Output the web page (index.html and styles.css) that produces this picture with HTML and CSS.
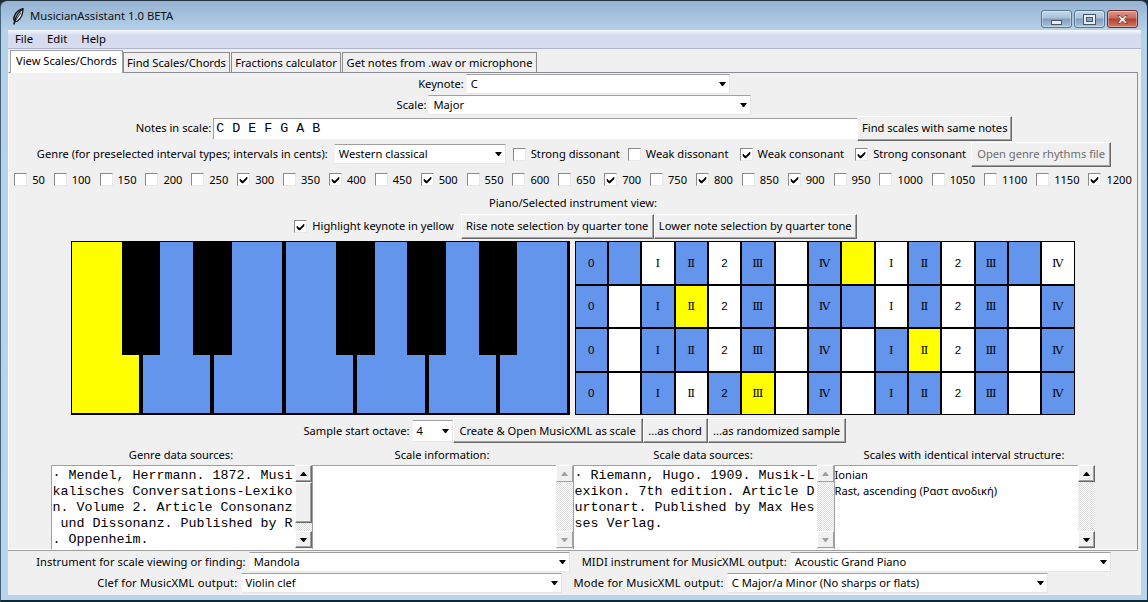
FILE: index.html
```html
<!DOCTYPE html>
<html lang="en">
<head>
<meta charset="utf-8">
<title>MusicianAssistant 1.0 BETA</title>
<link rel="stylesheet" href="styles.css">
</head>
<body>
<svg class="defs" width="0" height="0" aria-hidden="true">
  <symbol id="chk" viewBox="0 0 11 11"><path d="M2 5v2l2 2h1l4-4V3L5 7H4L3 6z" fill="#000" stroke="#000" stroke-width=".6"/></symbol>
  <symbol id="tri" viewBox="0 0 7 4"><path d="M0 0h7L4 4H3z" fill="currentColor"/></symbol>
  <symbol id="triup" viewBox="0 0 7 4"><path d="M0 4h7L4 0H3z" fill="currentColor"/></symbol>
</svg>
<div class="window">
  <header class="titlebar">
    <svg class="feather" width="12" height="17" viewBox="0 0 12 17"><path d="M11 .8C7.500 1.500 3.500 4.500 2.200 8.500 1.500 11 2 12.500 2.800 13.300L1.800 16.500" fill="none" stroke="#111" stroke-width="1.500"/><path d="M11 .8C11 5.500 9 10.500 5.500 13 4.500 13.700 3.500 13.700 2.800 13.300 3.500 9 7 4 11 .8z" fill="#e8eef4" stroke="#111" stroke-width="1.200"/><path d="M9 4.500 3.500 12.500" stroke="#111" stroke-width=".9"/></svg>
    <span class="wintitle">MusicianAssistant 1.0 BETA</span>
    <div class="caption">
      <div class="capbtn"><span class="glyph-min"></span></div>
      <div class="capbtn"><span class="glyph-max"></span></div>
      <div class="capbtn close"><svg width="15" height="11" viewBox="0 0 15 11"><path d="M2.500 1.500h2.500l2.500 2.500 2.500-2.500h2.500L9.500 5.500l3 4H10L7.500 7 5 9.500H2.500l3-4z" fill="#f4f0f0" stroke="#6d3a34" stroke-width=".8"/></svg></div>
    </div>
  </header>
  <div class="client">
    <nav class="menubar"><span>File</span><span>Edit</span><span>Help</span></nav>
    <div class="tabs">
      <div class="tab active">View Scales/Chords</div>
      <div class="tab t2">Find Scales/Chords</div>
      <div class="tab t3">Fractions calculator</div>
      <div class="tab t4">Get notes from .wav or microphone</div>
    </div>
    <main class="panel">
      <div class="row r21">
        <label class="lbl">Keynote:</label>
        <div class="combo w264"><span>C</span><svg class="arr"><use href="#tri"/></svg></div>
      </div>
      <div class="row r21">
        <label class="lbl">Scale:</label>
        <div class="combo w323"><span>Major</span><svg class="arr"><use href="#tri"/></svg></div>
      </div>
      <div class="row r26 nudge">
        <label class="lbl">Notes in scale:</label>
        <div class="entry">C D E F G A B</div>
        <button class="btn w154">Find scales with same notes</button>
      </div>
      <div class="row r26 nudge">
        <label class="lbl">Genre (for preselected interval types; intervals in cents):</label>
        <div class="combo w172 ml4"><span>Western classical</span><svg class="arr"><use href="#tri"/></svg></div>
        <div class="chk ml7"><span class="box"></span>Strong dissonant</div>
        <div class="chk ml8"><span class="box"></span>Weak dissonant</div>
        <div class="chk ml11"><span class="box"><svg class="tick"><use href="#chk"/></svg></span>Weak consonant</div>
        <div class="chk ml11"><span class="box"><svg class="tick"><use href="#chk"/></svg></span>Strong consonant</div>
        <button class="btn w140 ml5" disabled>Open genre rhythms file</button>
      </div>
      <div class="row cents">
        <div class="chk"><span class="box"></span>50</div>
        <div class="chk"><span class="box"></span>100</div>
        <div class="chk"><span class="box"></span>150</div>
        <div class="chk"><span class="box"></span>200</div>
        <div class="chk"><span class="box"></span>250</div>
        <div class="chk"><span class="box"><svg class="tick"><use href="#chk"/></svg></span>300</div>
        <div class="chk"><span class="box"></span>350</div>
        <div class="chk"><span class="box"><svg class="tick"><use href="#chk"/></svg></span>400</div>
        <div class="chk"><span class="box"></span>450</div>
        <div class="chk"><span class="box"><svg class="tick"><use href="#chk"/></svg></span>500</div>
        <div class="chk"><span class="box"></span>550</div>
        <div class="chk"><span class="box"></span>600</div>
        <div class="chk"><span class="box"></span>650</div>
        <div class="chk"><span class="box"><svg class="tick"><use href="#chk"/></svg></span>700</div>
        <div class="chk"><span class="box"></span>750</div>
        <div class="chk"><span class="box"><svg class="tick"><use href="#chk"/></svg></span>800</div>
        <div class="chk"><span class="box"></span>850</div>
        <div class="chk"><span class="box"><svg class="tick"><use href="#chk"/></svg></span>900</div>
        <div class="chk"><span class="box"></span>950</div>
        <div class="chk"><span class="box"></span>1000</div>
        <div class="chk"><span class="box"></span>1050</div>
        <div class="chk"><span class="box"></span>1100</div>
        <div class="chk"><span class="box"></span>1150</div>
        <div class="chk"><span class="box"><svg class="tick"><use href="#chk"/></svg></span>1200</div>
      </div>
      <div class="row r21"><span class="lbl">Piano/Selected instrument view:</span></div>
      <div class="row r26 nudge4">
        <div class="chk"><span class="box"><svg class="tick"><use href="#chk"/></svg></span>Highlight keynote in yellow</div>
        <button class="btn w192 ml7">Rise note selection by quarter tone</button>
        <button class="btn w203">Lower note selection by quarter tone</button>
      </div>
      <div class="instruments">
        <div class="piano">
          <div class="white yellow"></div><div class="white"></div><div class="white"></div><div class="white"></div><div class="white"></div><div class="white"></div><div class="white"></div>
          <div class="black b1"></div><div class="black b2"></div><div class="black b3"></div><div class="black b4"></div><div class="black b5"></div>
        </div>
        <div class="frets">
          <div class="c b">0</div><div class="c b"></div><div class="c">Ⅰ</div><div class="c b">Ⅱ</div><div class="c">2</div><div class="c b">Ⅲ</div><div class="c"></div><div class="c b">Ⅳ</div><div class="c y"></div><div class="c">Ⅰ</div><div class="c b">Ⅱ</div><div class="c">2</div><div class="c b">Ⅲ</div><div class="c b"></div><div class="c">Ⅳ</div>
          <div class="c b">0</div><div class="c"></div><div class="c b">Ⅰ</div><div class="c y">Ⅱ</div><div class="c">2</div><div class="c b">Ⅲ</div><div class="c"></div><div class="c b">Ⅳ</div><div class="c b"></div><div class="c">Ⅰ</div><div class="c b">Ⅱ</div><div class="c">2</div><div class="c b">Ⅲ</div><div class="c"></div><div class="c b">Ⅳ</div>
          <div class="c b">0</div><div class="c"></div><div class="c b">Ⅰ</div><div class="c b">Ⅱ</div><div class="c">2</div><div class="c b">Ⅲ</div><div class="c"></div><div class="c b">Ⅳ</div><div class="c"></div><div class="c b">Ⅰ</div><div class="c y">Ⅱ</div><div class="c">2</div><div class="c b">Ⅲ</div><div class="c"></div><div class="c b">Ⅳ</div>
          <div class="c b">0</div><div class="c"></div><div class="c b">Ⅰ</div><div class="c">Ⅱ</div><div class="c b">2</div><div class="c y">Ⅲ</div><div class="c"></div><div class="c b">Ⅳ</div><div class="c"></div><div class="c b">Ⅰ</div><div class="c b">Ⅱ</div><div class="c">2</div><div class="c b">Ⅲ</div><div class="c"></div><div class="c b">Ⅳ</div>
        </div>
      </div>
      <div class="row r28">
        <label class="lbl">Sample start octave:</label>
        <div class="combo w41 short"><span>4</span><svg class="arr"><use href="#tri"/></svg></div>
        <button class="btn w189">Create &amp; Open MusicXML as scale</button>
        <button class="btn w65">...as chord</button>
        <button class="btn w137">...as randomized sample</button>
      </div>
      <div class="heads">
        <span>Genre data sources:</span>
        <span>Scale information:</span>
        <span>Scale data sources:</span>
        <span>Scales with identical interval structure:</span>
      </div>
      <div class="texts">
        <div class="tbox">
          <div class="tarea mono"><div>· Mendel, Herrmann. 1872. Musi</div><div>kalisches Conversations-Lexiko</div><div>n. Volume 2. Article Consonanz</div><div> und Dissonanz. Published by R</div><div>. Oppenheim.</div></div>
          <div class="sb"><div class="sbb"><svg class="sa"><use href="#triup"/></svg></div><div class="thumb"></div><div class="trough"></div><div class="sbb"><svg class="sa"><use href="#tri"/></svg></div></div>
        </div>
        <div class="tbox">
          <div class="tarea"></div>
          <div class="sb off"><div class="sbb"><svg class="sa"><use href="#triup"/></svg></div><div class="trough"></div><div class="sbb"><svg class="sa"><use href="#tri"/></svg></div></div>
        </div>
        <div class="tbox">
          <div class="tarea mono"><div>· Riemann, Hugo. 1909. Musik-L</div><div>exikon. 7th edition. Article D</div><div>urtonart. Published by Max Hes</div><div>ses Verlag.</div></div>
          <div class="sb off"><div class="sbb"><svg class="sa"><use href="#triup"/></svg></div><div class="trough"></div><div class="sbb"><svg class="sa"><use href="#tri"/></svg></div></div>
        </div>
        <div class="tbox">
          <div class="tarea list"><div>Ionian</div><div>Rast, ascending (Ραστ ανοδική)</div></div>
          <div class="sb"><div class="sbb"><svg class="sa"><use href="#triup"/></svg></div><div class="trough"></div><div class="sbb"><svg class="sa"><use href="#tri"/></svg></div></div>
        </div>
      </div>
    </main>
    <div class="foot">
      <div class="frow fr1">
        <div class="fgroup"><label class="lbl">Instrument for scale viewing or finding:</label><div class="combo w321"><span>Mandola</span><svg class="arr"><use href="#tri"/></svg></div></div>
        <div class="fgroup"><label class="lbl">MIDI instrument for MusicXML output:</label><div class="combo w321"><span>Acoustic Grand Piano</span><svg class="arr"><use href="#tri"/></svg></div></div>
      </div>
      <div class="frow fr2">
        <div class="fgroup"><label class="lbl">Clef for MusicXML output:</label><div class="combo w321"><span>Violin clef</span><svg class="arr"><use href="#tri"/></svg></div></div>
        <div class="fgroup"><label class="lbl">Mode for MusicXML output:</label><div class="combo w321"><span>C Major/a Minor (No sharps or flats)</span><svg class="arr"><use href="#tri"/></svg></div></div>
      </div>
    </div>
  </div>
</div>
</body>
</html>
```
FILE: styles.css
```css
* { box-sizing: border-box; }
html, body { margin: 0; padding: 0; height: 100%; }
body { background: #1b2a35; font: 11.15px/16px "Noto Sans", "Open Sans", sans-serif; color: #000; overflow: hidden; }
.defs { display: block; height: 0; }

.window {
  width: 1148px; height: 602px; display: flex; flex-direction: column;
  padding: 0 6px 5px 7px; border-radius: 7px 7px 0 0;
  background: linear-gradient(#94b2d1, #b6d1ea 30px, #bad4ec);
  border-top: 1px solid #23323e; border-left: 1px solid #44627a; border-right: 1px solid #1c3b44;
  border-bottom: 2px solid #0f2a33;
}
.titlebar { height: 29px; flex: none; display: flex; align-items: center; padding-left: 4px; }
.feather { flex: none; margin-top: 1px; }
.wintitle { margin-left: 6px; font-size: 11.3px; color: #111; }
.caption { margin-left: auto; align-self: flex-start; display: flex; gap: 2px; margin-top: 9px; margin-right: 3px; }
.capbtn {
  width: 31px; height: 18px; display: flex; align-items: center; justify-content: center;
  border: 1px solid #5a7690; border-radius: 3px;
  background: linear-gradient(#c6d8ea, #a8c0d8 45%, #7f9dbb 50%, #a9c3dc);
  box-shadow: inset 0 0 0 1px rgba(255,255,255,.35);
}
.capbtn.close { border-color: #6b3027; background: linear-gradient(#dc9a8d, #c9685a 45%, #b33e2e 50%, #cf7a66); }
.glyph-min { width: 11px; height: 5px; margin-top: 6px; background: #e7edf3; border: 1px solid #45576a; }
.glyph-max { width: 11px; height: 9px; background: transparent; border: 2px solid #e7edf3; outline: 1px solid #45576a; box-shadow: inset 0 0 0 1px #45576a; }

.client { flex: 1; min-height: 0; display: flex; flex-direction: column; background: #f0f0f0; }
.menubar {
  height: 19px; flex: none; display: flex; gap: 14px; padding: 0 7px; align-items: center;
  background: linear-gradient(#f6f8fc, #d5dbee 30%, #d7dcef);
  border-bottom: 1px solid #aeb5cd; font-size: 11.3px;
}
.tabs { height: 24px; flex: none; display: flex; align-items: flex-end; padding-left: 2px; margin-bottom: -1px; position: relative; z-index: 1; }
.tab {
  height: 20px; border: 1px solid #8c8c8c; border-bottom: 0; margin-left: 1px; padding-top: 1px;
  display: flex; align-items: center; justify-content: center; background: #f0f0f0; margin-bottom: 1px;
}
.tab.active { width: 113px; height: 23px; margin: 0; background: #fff; padding: 0 0 2px; border-color: #a0a0a0; }
.t2 { width: 107px; margin-left: 0; }
.t3 { width: 110px; }
.t4 { width: 195px; }

.panel {
  width: 1130px; height: 478px; flex: none; overflow: hidden; display: flex; flex-direction: column;
  border: 1px solid #8b8d96; border-left-color: #fff; border-bottom-color: #fff;
  box-shadow: 0 1px 0 #a0a0a0;
  background: #f0f0f0;
}
.row { display: flex; align-items: center; justify-content: center; flex: none; white-space: nowrap; }
.r21 { height: 21px; padding-left: 2px; }
.r26 { height: 26px; }
.r28 { height: 28px; padding: 1px 0 0 3px; }
.nudge { padding-left: 2px; }
.nudge4 { padding-left: 5px; }
.cents { height: 25px; gap: 8.75px; }
.lbl { margin-right: 2px; }

.combo {
  height: 20px; display: flex; align-items: center; justify-content: space-between; padding: 0 3px 0 4px;
  background: #fff; border: 1px solid #e6e6e6; border-top-color: #a0a0a0; border-left-color: #f4f4f4; flex: none;
}
.arr { width: 7px; height: 4px; color: #000; }
.entry { width: 644px; height: 21px; flex: none; background: #fff; border-left: 1px solid #a0a0a0; border-top: 1px solid #a0a0a0; font: 13.33px/19px "Liberation Mono", monospace; padding-left: 2px; }
.btn {
  flex: none; height: 25px; padding: 0; font: inherit; color: #000; white-space: nowrap;
  background: #f0f0f0; border: 1px solid; border-color: #fff #696969 #696969 #fff;
  box-shadow: inset -1px -1px 0 #a0a0a0;
}
.btn:disabled { color: #6d6d6d; }
.w264 { width: 264px; } .w323 { width: 323px; } .w172 { width: 172px; } .w321 { width: 321px; }
.w41 { width: 41px; } .w154 { width: 155px; } .w140 { width: 140px; } .w192 { width: 193px; }
.w203 { width: 203px; } .w189 { width: 190px; } .w65 { width: 65px; } .w137 { width: 138px; }
.short { height: 22px; }
.ml4 { margin-left: 4px; } .ml5 { margin-left: 5px; } .ml7 { margin-left: 7px; } .ml8 { margin-left: 8px; } .ml11 { margin-left: 11px; }

.chk { display: flex; align-items: center; gap: 5px; flex: none; }
.box {
  width: 13px; height: 13px; display: flex; align-items: center; justify-content: center; background: #fff; flex: none;
  border: 1px solid; border-color: #8a8a8a #e8e8e8 #e8e8e8 #8a8a8a;
}
.tick { width: 11px; height: 11px; }

.instruments { display: flex; justify-content: center; gap: 5px; flex: none; margin-top: 2px; height: 175px; align-items: flex-start; padding-right: 1px; }
.piano { position: relative; width: 499px; height: 174px; flex: none; background: #000; border: 1px solid #000; border-width: 1px 2px 2px 1px; display: flex; gap: 4px; }
.white { flex: 1; background: #6495ed; }
.white.yellow { background: #ff0; }
.black { position: absolute; top: 0; height: 113px; background: #000; width: 39px; }
.b1 { left: 50px; width: 38px; } .b2 { left: 121px; } .b3 { left: 264px; } .b4 { left: 335px; } .b5 { left: 407px; width: 38px; }
.frets { width: 500px; height: 174px; flex: none; background: #000; display: grid; padding: 1px; gap: 2px; grid-template-columns: repeat(15, 1fr); grid-template-rows: repeat(4, 1fr); }
.c { background: #fff; display: flex; align-items: center; justify-content: center; font-size: 11.5px; font-family: "Liberation Sans", "DejaVu Serif", serif; }
.c.b { background: #6495ed; }
.c.y { background: #ff0; }

.heads { display: grid; grid-template-columns: repeat(4, 261px); justify-content: center; height: 21px; flex: none; text-align: center; align-items: center; white-space: nowrap; padding-right: 1px; }
.texts { display: grid; grid-template-columns: repeat(4, 261px); justify-content: center; height: 85px; flex: none; padding-right: 1px; }
.tbox { display: flex; height: 85px; }
.tarea { flex: 1; min-width: 0; height: 85px; background: #fff; border-top: 1px solid #a0a0a0; border-left: 1px solid #a0a0a0; overflow: hidden; padding-top: 2px; }
.mono { font: 13.33px/16px "Liberation Mono", monospace; white-space: pre; padding-left: 1px; }
.list { padding-left: 0; padding-top: 1px; }
.sb { width: 17px; height: 83px; flex: none; display: flex; flex-direction: column; }
.sbb, .thumb { flex: none; background: #f0f0f0; border: 1px solid; border-color: #fff #696969 #696969 #fff; box-shadow: inset -1px -1px 0 #a0a0a0; }
.sbb { height: 17px; display: flex; align-items: center; justify-content: center; }
.thumb { height: 41px; }
.trough { flex: 1; background: repeating-conic-gradient(#fff 0 25%, #dcdcdc 0 50%) 0 0 / 2px 2px; }
.sa { width: 7px; height: 4px; color: #000; }
.off .sa { color: #a0a0a0; }
.off .sbb { border-color: #fff #a0a0a0 #a0a0a0 #fff; box-shadow: none; }

.foot { flex: 1; display: flex; flex-direction: column; padding-top: 2px; }
.frow { display: flex; justify-content: center; gap: 12px; height: 20px; margin-bottom: 1px; flex: none; white-space: nowrap; }
.fr1 { padding-right: 2px; }
.fr2 { padding-right: 4px; }
.fr1 .lbl { letter-spacing: .08px; }
.fr2 .lbl { letter-spacing: .2px; }
.fgroup { display: flex; align-items: center; gap: 1px; }
```
